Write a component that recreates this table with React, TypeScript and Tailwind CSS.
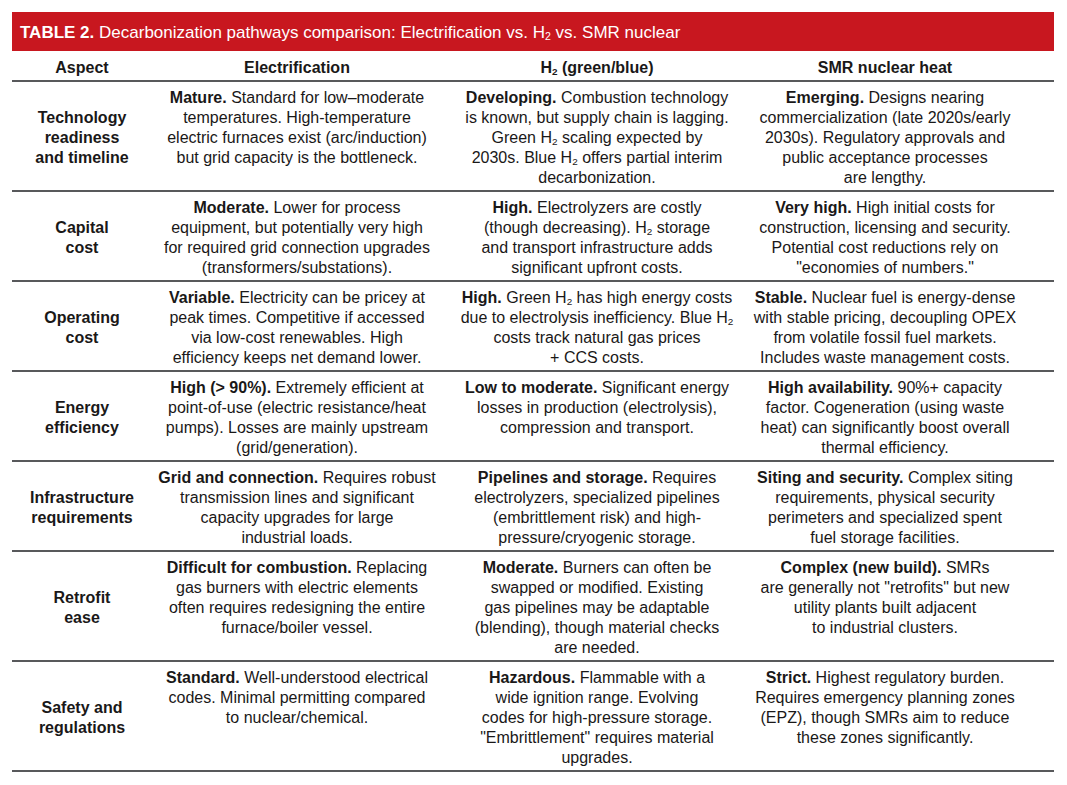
import type { ReactNode } from "react";

type Row = {
  aspect: string[];
  cells: ReactNode[][];
};

// leading-none keeps the smaller subscript from growing the 20px line box
const H2 = () => (
  <>
    H<span className="relative top-[0.22em] text-[0.62em] leading-none">2</span>
  </>
);

const rows: Row[] = [
  {
    aspect: ["Technology", "readiness", "and timeline"],
    cells: [
      [
        <><b>Mature.</b> Standard for low–moderate</>,
        "temperatures. High-temperature",
        "electric furnaces exist (arc/induction)",
        "but grid capacity is the bottleneck.",
      ],
      [
        <><b>Developing.</b> Combustion technology</>,
        "is known, but supply chain is lagging.",
        <>Green <H2 /> scaling expected by</>,
        <>2030s. Blue <H2 /> offers partial interim</>,
        "decarbonization.",
      ],
      [
        <><b>Emerging.</b> Designs nearing</>,
        "commercialization (late 2020s/early",
        "2030s). Regulatory approvals and",
        "public acceptance processes",
        "are lengthy.",
      ],
    ],
  },
  {
    aspect: ["Capital", "cost"],
    cells: [
      [
        <><b>Moderate.</b> Lower for process</>,
        "equipment, but potentially very high",
        "for required grid connection upgrades",
        "(transformers/substations).",
      ],
      [
        <><b>High.</b> Electrolyzers are costly</>,
        <>(though decreasing). <H2 /> storage</>,
        "and transport infrastructure adds",
        "significant upfront costs.",
      ],
      [
        <><b>Very high.</b> High initial costs for</>,
        "construction, licensing and security.",
        "Potential cost reductions rely on",
        '"economies of numbers."',
      ],
    ],
  },
  {
    aspect: ["Operating", "cost"],
    cells: [
      [
        <><b>Variable.</b> Electricity can be pricey at</>,
        "peak times. Competitive if accessed",
        "via low-cost renewables. High",
        "efficiency keeps net demand lower.",
      ],
      [
        <><b>High.</b> Green <H2 /> has high energy costs</>,
        <>due to electrolysis inefficiency. Blue <H2 /></>,
        "costs track natural gas prices",
        "+ CCS costs.",
      ],
      [
        <><b>Stable.</b> Nuclear fuel is energy-dense</>,
        "with stable pricing, decoupling OPEX",
        "from volatile fossil fuel markets.",
        "Includes waste management costs.",
      ],
    ],
  },
  {
    aspect: ["Energy", "efficiency"],
    cells: [
      [
        <><b>High (&gt; 90%).</b> Extremely efficient at</>,
        "point-of-use (electric resistance/heat",
        "pumps). Losses are mainly upstream",
        "(grid/generation).",
      ],
      [
        <><b>Low to moderate.</b> Significant energy</>,
        "losses in production (electrolysis),",
        "compression and transport.",
      ],
      [
        <><b>High availability.</b> 90%+ capacity</>,
        "factor. Cogeneration (using waste",
        "heat) can significantly boost overall",
        "thermal efficiency.",
      ],
    ],
  },
  {
    aspect: ["Infrastructure", "requirements"],
    cells: [
      [
        <><b>Grid and connection.</b> Requires robust</>,
        "transmission lines and significant",
        "capacity upgrades for large",
        "industrial loads.",
      ],
      [
        <><b>Pipelines and storage.</b> Requires</>,
        "electrolyzers, specialized pipelines",
        "(embrittlement risk) and high-",
        "pressure/cryogenic storage.",
      ],
      [
        <><b>Siting and security.</b> Complex siting</>,
        "requirements, physical security",
        "perimeters and specialized spent",
        "fuel storage facilities.",
      ],
    ],
  },
  {
    aspect: ["Retrofit", "ease"],
    cells: [
      [
        <><b>Difficult for combustion.</b> Replacing</>,
        "gas burners with electric elements",
        "often requires redesigning the entire",
        "furnace/boiler vessel.",
      ],
      [
        <><b>Moderate.</b> Burners can often be</>,
        "swapped or modified. Existing",
        "gas pipelines may be adaptable",
        "(blending), though material checks",
        "are needed.",
      ],
      [
        <><b>Complex (new build).</b> SMRs</>,
        'are generally not "retrofits" but new',
        "utility plants built adjacent",
        "to industrial clusters.",
      ],
    ],
  },
  {
    aspect: ["Safety and", "regulations"],
    cells: [
      [
        <><b>Standard.</b> Well-understood electrical</>,
        "codes. Minimal permitting compared",
        "to nuclear/chemical.",
      ],
      [
        <><b>Hazardous.</b> Flammable with a</>,
        "wide ignition range. Evolving",
        "codes for high-pressure storage.",
        '"Embrittlement" requires material',
        "upgrades.",
      ],
      [
        <><b>Strict.</b> Highest regulatory burden.</>,
        "Requires emergency planning zones",
        "(EPZ), though SMRs aim to reduce",
        "these zones significantly.",
      ],
    ],
  },
];

// column widths tuned so the centres sit where the print layout has them
const gridCols = "grid grid-cols-[140px_290px_310px_302px]";
const cellPad = ["", "", "", "pr-9"];

export default function App() {
  return (
    <div className="min-h-screen bg-white p-3 font-['Liberation_Sans',Arial,sans-serif] text-[16px] leading-5 text-[#1a1818]">
      <div className="w-[1042px]">
        <div className="flex h-[39px] items-center bg-[#c8171f] pt-[2px] pl-2 text-[17px] text-white">
          <span>
            <b>TABLE 2.</b> Decarbonization pathways comparison: Electrification vs. <H2 /> vs. SMR nuclear
          </span>
        </div>

        <div className={`${gridCols} border-b-2 border-[#58595b] pt-[7px] pb-[2px] text-center font-bold`}>
          <div>Aspect</div>
          <div>Electrification</div>
          <div>
            <H2 /> (green/blue)
          </div>
          <div className="pr-9">SMR nuclear heat</div>
        </div>

        {rows.map((row) => (
          <div
            key={row.aspect.join(" ")}
            className={`${gridCols} border-b-2 border-[#58595b] pt-[6px] pb-[2px] text-center`}
          >
            <div className="flex flex-col justify-center font-bold">
              {row.aspect.map((line) => (
                <div key={line}>{line}</div>
              ))}
            </div>
            {row.cells.map((lines, i) => (
              <div key={i} className={`whitespace-nowrap ${cellPad[i + 1]}`}>
                {lines.map((line, j) => (
                  <div key={j}>{line}</div>
                ))}
              </div>
            ))}
          </div>
        ))}
      </div>
    </div>
  );
}
